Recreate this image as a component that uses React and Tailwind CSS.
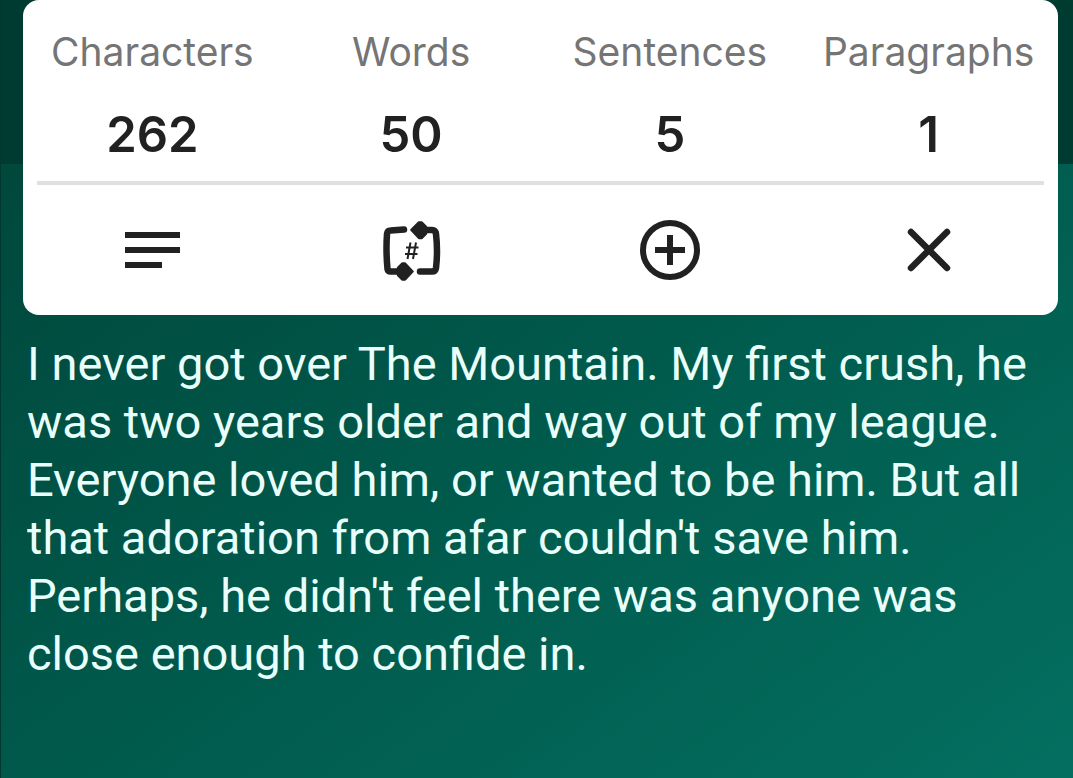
import React, { useState } from "react";

const initialText =
  "I never got over The Mountain. My first crush, he was two years older and way out of my league. Everyone loved him, or wanted to be him. But all that adoration from afar couldn't save him. Perhaps, he didn't feel there was anyone was close enough to confide in.";

const stats = [
  { label: "Characters", value: 262 },
  { label: "Words", value: 50 },
  { label: "Sentences", value: 5 },
  { label: "Paragraphs", value: 1 },
];

const LinesIcon = () => (
  <svg viewBox="0 0 60 60" className="size-15" fill="currentColor">
    <path d="M3 12h55v6H3zM3 27h55v6H3zM3 42h37v6H3z" />
  </svg>
);

const CountIcon = () => (
  <svg viewBox="0 0 60 60" className="size-15 overflow-visible" fill="none" stroke="currentColor">
    <path
      d="M23 9.500L9.500 10.500Q6.500 10.500 6 14Q4.800 31 6.500 49Q7 51.500 9.500 51.500H20M42 10H51Q54.500 10 55 14Q57 31 55 48Q54.500 51.500 51 51.500H39"
      strokeWidth="6.500"
      strokeLinecap="round"
    />
    <path
      d="M30.500 10L38 2.500H40.500L45 7V13.500L40.500 18H38ZM31.500 51.500L24 43.500H21.500L17 48V55L21.500 59.500H24Z"
      fill="currentColor"
      strokeWidth="2.500"
      strokeLinejoin="round"
    />
    <path d="M29.500 22.500L26.500 39M35 22.500L32 39M25 27.500H37.500M24 34H36.500" strokeWidth="2" />
  </svg>
);

const AddIcon = () => (
  <svg viewBox="0 0 60 60" className="size-15" fill="none" stroke="currentColor">
    <circle cx="30" cy="30" r="27" strokeWidth="6" />
    <path d="M30 15v30M15 30h30" strokeWidth="6" />
  </svg>
);

const CloseIcon = () => (
  <svg viewBox="0 0 60 60" className="size-15" fill="none" stroke="currentColor">
    <path d="M12 12L48 48M48 12L12 48" strokeWidth="6.500" strokeLinecap="round" />
  </svg>
);

const actions = [
  { label: "Format text", Icon: LinesIcon },
  { label: "Switch count", Icon: CountIcon },
  { label: "Add", Icon: AddIcon },
  { label: "Close", Icon: CloseIcon },
];

const App = () => {
  const [text, setText] = useState(initialText);

  return (
    <div className="min-h-screen border-l border-[#00382f] bg-linear-to-br from-[#004338] via-[#00594b] to-[#046f60] font-['Inter',sans-serif]">
      {/* Darker app bar behind the card */}
      <div className="h-41 bg-[#003b31]" />

      <section className="relative -mt-41 ml-[22px] mr-[15px] rounded-2xl bg-white text-[#212121]">
        <dl className="grid grid-cols-4 pt-6 text-center">
          {stats.map((stat) => (
            <div key={stat.label}>
              <dt className="text-[39px] leading-14 text-[#757575]">{stat.label}</dt>
              <dd className="mt-[25px] text-[49px] leading-15 font-semibold">{stat.value}</dd>
            </div>
          ))}
        </dl>

        <hr className="mx-3.5 mt-4 border-t-4 border-[#e0e0e0]" />

        <div className="grid grid-cols-4 py-[35px]">
          {actions.map(({ label, Icon }) => (
            <button key={label} type="button" aria-label={label} className="flex justify-center">
              <Icon />
            </button>
          ))}
        </div>
      </section>

      <main className="px-[26px] pt-5">
        <textarea
          aria-label="Text"
          value={text}
          onChange={(e) => setText(e.target.value)}
          spellCheck={false}
          rows={7}
          className="block w-full resize-none overflow-hidden text-[47px] leading-[58px] text-[#e8fffb] font-['Roboto',sans-serif] outline-none"
        />
      </main>
    </div>
  );
};

export default App;
